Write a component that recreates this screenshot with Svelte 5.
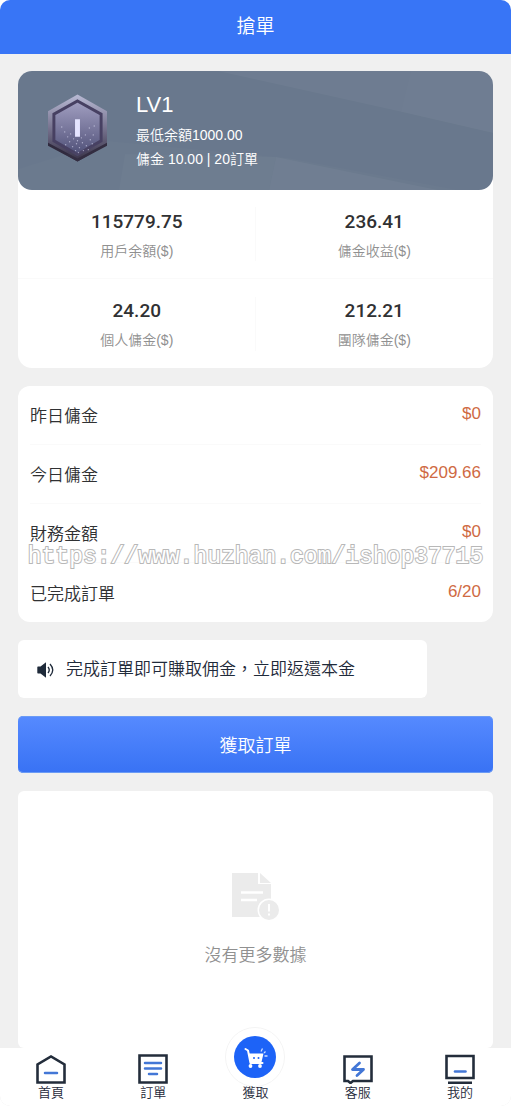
<script>
  const stats = [
    { value: '115779.75', label: '用戶余額($)' },
    { value: '236.41', label: '傭金收益($)' },
    { value: '24.20', label: '個人傭金($)' },
    { value: '212.21', label: '團隊傭金($)' }
  ];
  const rows = [
    { label: '昨日傭金', value: '$0' },
    { label: '今日傭金', value: '$209.66' },
    { label: '財務金額', value: '$0' },
    { label: '已完成訂單', value: '6/20' }
  ];
  const specks = [
    [18, 52], [22, 49], [25, 54], [29, 51], [32, 55], [35, 50], [39, 53], [43, 47],
    [20, 44], [26, 46], [34, 45], [38, 42], [45, 51], [17, 39], [42, 35], [47, 33],
    [28, 58], [31, 60], [36, 58], [23, 41], [46, 42], [41, 57], [30, 48], [14, 34]
  ];
</script>

<div class="page">
  <header><h1>搶單</h1></header>

  <main>
    <section class="account">
      <div class="level">
        <svg class="facets" viewBox="0 0 475 119" preserveAspectRatio="none" aria-hidden="true">
          <path d="M200 0 380 40 475 62V0Z" fill="#fff" opacity=".035" />
          <path d="M393 0 383 41 475 62V0Z" fill="#fff" opacity=".012" />
          <path d="M90 70 270 87 440 119H0V98Z" fill="#fff" opacity=".015" />
          <path d="M107 83 258 86 251 119H101Z" fill="#fff" opacity=".025" />
          <path d="M258 86 420 119H251Z" fill="#fff" opacity=".035" />
        </svg>
        <svg class="badge" viewBox="0 0 60 70" aria-hidden="true">
          <defs>
            <linearGradient id="rim" x1="0" y1="0" x2="0" y2="1">
              <stop offset="0" stop-color="#b9bad4" />
              <stop offset=".5" stop-color="#77738f" />
              <stop offset="1" stop-color="#332d43" />
            </linearGradient>
            <linearGradient id="face" x1="0" y1="0" x2="0" y2="1">
              <stop offset="0" stop-color="#a29fc1" />
              <stop offset=".55" stop-color="#76759a" />
              <stop offset="1" stop-color="#4f5078" />
            </linearGradient>
          </defs>
          <path d="M30 1 60 18V52L30 69 0 52V18Z" fill="url(#rim)" />
          <path d="M0 50 30 66 60 50V53L30 69 0 53Z" fill="#302a3e" />
          <path d="M30 7.500 54 21V48L30 62 6 48V21Z" fill="url(#face)" stroke="#474062" stroke-width="3" />
          {#each specks as [x, y]}
            <circle cx={x} cy={y} r=".7" fill="#d8d8f0" opacity=".65" />
          {/each}
          <path d="M27.500 26H32.500V44H27.500Z" fill="#e5e4ff" />
        </svg>
        <div class="level-text">
          <h2>LV1</h2>
          <p>最低余額1000.00</p>
          <p>傭金 10.00 | 20訂單</p>
        </div>
      </div>
      <div class="stats">
        {#each stats as s}
          <div class="stat">
            <strong>{s.value}</strong>
            <span>{s.label}</span>
          </div>
        {/each}
      </div>
    </section>

    <section class="summary">
      {#each rows as r}
        <div class="row"><span>{r.label}</span><b>{r.value}</b></div>
      {/each}
      <div class="watermark">https://www.huzhan.com/ishop37715</div>
    </section>

    <div class="notice">
      <svg viewBox="0 0 18 16" aria-hidden="true">
        <path d="M1 4.500H3.500L9 .2V15.800L3.500 11.500H1Q.3 11.500 .3 10.800V5.200Q.3 4.500 1 4.500Z" fill="#1f2a3a" />
        <path d="M11 5Q13.500 8 11 11M13 2Q18.500 8 13 14" fill="none" stroke="#1f2a3a" stroke-width="1.300" />
      </svg>
      <span>完成訂單即可賺取佣金，立即返還本金</span>
    </div>

    <button class="grab" type="button">獲取訂單</button>

    <section class="empty">
      <svg viewBox="0 0 48 48" aria-hidden="true">
        <path d="M0 1H26V12H39V45H0Z" fill="#ebebeb" />
        <path d="M28 1 39 11H28Z" fill="#ebebeb" />
        <path d="M9 20.500H31M9 28H25" stroke="#fff" stroke-width="2.500" />
        <circle cx="37" cy="38" r="11.500" fill="#fff" />
        <circle cx="37" cy="38" r="10" fill="#ebebeb" />
        <path d="M37 32V39.500M37 41.500V43.500" stroke="#fff" stroke-width="2" />
      </svg>
      <p>沒有更多數據</p>
    </section>
  </main>

  <nav>
    <a href="#home">
      <svg viewBox="0 0 30 30" aria-hidden="true">
        <path d="M1.500 28.500V10.500L15 2.500 28.500 10.500V28.500Z" fill="none" stroke="#232d3b" stroke-width="2.600" />
        <path d="M9 19H21" stroke="#4377d6" stroke-width="2.500" stroke-linecap="round" />
      </svg>
      <span>首頁</span>
    </a>
    <a href="#orders">
      <svg viewBox="0 0 30 30" aria-hidden="true">
        <path d="M1.500 1.500H28.500V28.500H1.500Z" fill="none" stroke="#232d3b" stroke-width="2.600" />
        <path d="M7 9H23M7 14.500H23M11 20H19" stroke="#4377d6" stroke-width="2.500" stroke-linecap="round" />
      </svg>
      <span>訂單</span>
    </a>
    <a href="#grab" class="center">
      <i>
        <svg viewBox="0 0 42 42" aria-hidden="true">
          <circle cx="21" cy="21" r="21" fill="#1d63f7" />
          <path d="M11.500 13 14 14.500 16.500 27H28.500" fill="none" stroke="#fff" stroke-width="2" stroke-linecap="round" stroke-linejoin="round" />
          <path d="M14.500 17.500H29.500L27.500 26H16.500Z" fill="#fff" />
          <circle cx="16.500" cy="30" r="1.900" fill="#fff" />
          <circle cx="26" cy="30" r="1.900" fill="#fff" />
          <circle cx="20" cy="22" r="1" fill="#1d63f7" />
          <circle cx="24.500" cy="22" r="1" fill="#1d63f7" />
          <path d="M27 15.500 28.500 12.500M30 17 31.500 15.500M30.500 20H33.500" stroke="#cfe0ff" stroke-width="1.300" />
        </svg>
      </i>
      <span>獲取</span>
    </a>
    <a href="#service">
      <svg viewBox="0 0 30 30" aria-hidden="true">
        <path d="M1.500 2.500H28.500V27H10L7.500 29 5 27H1.500Z" fill="none" stroke="#232d3b" stroke-width="2.600" />
        <path d="M16.500 9 9.500 15.500H20.500L14 21.500" fill="none" stroke="#4377d6" stroke-width="2.800" stroke-linecap="round" stroke-linejoin="round" />
      </svg>
      <span>客服</span>
    </a>
    <a href="#mine">
      <svg viewBox="0 0 30 30" aria-hidden="true">
        <path d="M1.500 2H28.500V24H1.500Z" fill="none" stroke="#232d3b" stroke-width="2.600" />
        <path d="M3 28.700H27" stroke="#232d3b" stroke-width="2.400" />
        <path d="M10 17.500H20.500" stroke="#4377d6" stroke-width="2.600" stroke-linecap="round" />
      </svg>
      <span>我的</span>
    </a>
  </nav>
</div>

<style>
  :global(body) {
    margin: 0;
    background: #fff;
    font-family: "Liberation Sans", "Noto Sans CJK TC", sans-serif;
    font-weight: 350;
  }
  h1, h2, p { margin: 0; font-weight: 350; }
  .page {
    min-height: 100vh;
    display: flex;
    flex-direction: column;
    background: #f0f0f0;
    border-radius: 10px;
    overflow: hidden;
  }
  header {
    height: 54px;
    display: flex;
    align-items: center;
    justify-content: center;
    background: #3875f6;
    color: #fff;
  }
  h1 { font-size: 19px; line-height: 28px; }
  main {
    flex: 1;
    display: flex;
    flex-direction: column;
    gap: 18px;
    padding: 17px 18px 0;
  }
  .account { background: #fff; border-radius: 14px; }
  .level {
    position: relative;
    height: 119px;
    box-sizing: border-box;
    display: flex;
    gap: 29px;
    padding: 22px 30px 0;
    border-radius: 14px;
    overflow: hidden;
    background: #69788d;
    color: #fff;
  }
  .facets { position: absolute; inset: 0; width: 100%; height: 100%; }
  .badge { width: 59px; height: 70px; }
  h2 { font-size: 22px; line-height: 24px; padding-bottom: 6px; }
  .level-text p { font-size: 14px; line-height: 24px; }
  .stats { display: grid; grid-template-columns: 1fr 1fr; }
  .stat {
    height: 89px;
    box-sizing: border-box;
    display: flex;
    flex-direction: column;
    align-items: center;
    padding-top: 19px;
    border-bottom: 1px solid #fafafa;
    background: linear-gradient(#fafafa, #fafafa) right center / 1px 54px no-repeat;
  }
  .stat:nth-child(even) { background: none; }
  .stat:nth-child(n + 3) { border-bottom: 0; }
  .stat strong {
    font: 500 19px/26px "Roboto", sans-serif;
    color: #303133;
  }
  .stat span { padding-top: 4px; font-size: 14px; line-height: 24px; color: #909090; }
  .summary {
    position: relative;
    padding: 0 12px;
    background: #fff;
    border-radius: 12px;
  }
  .row {
    height: 59px;
    box-sizing: border-box;
    display: flex;
    justify-content: space-between;
    align-items: center;
    border-bottom: 1px solid #fafafa;
    font-size: 17px;
    line-height: 26px;
    color: #303133;
  }
  .row:nth-child(4) { border: 0; }
  .row span { padding-top: 4px; }
  .row b { font-weight: 400; color: #cf6a43; padding-bottom: 2px; }
  .watermark {
    position: absolute;
    top: 156px;
    left: 0;
    right: 0;
    text-align: center;
    white-space: nowrap;
    font: 400 23px/30px "Liberation Mono", monospace;
    color: #fff;
    -webkit-text-stroke: 2px #b8b8b8;
    paint-order: stroke fill;
    pointer-events: none;
  }
  .notice {
    width: 86%;
    box-sizing: border-box;
    min-height: 58px;
    display: flex;
    align-items: center;
    gap: 11px;
    padding: 2px 19px 0;
    background: #fff;
    border-radius: 6px;
    font-size: 17px;
    line-height: 26px;
    color: #1f2a3a;
  }
  .notice svg { width: 18px; height: 16px; flex: none; }
  .grab {
    height: 57px;
    padding: 0 0 2px;
    border: 0;
    border-radius: 5px;
    background: linear-gradient(#568aff, #3872f4);
    color: #fff;
    font: inherit;
    font-size: 18px;
    box-shadow: inset 0 1px #6b9bf5, inset 0 -1px #6b9bf5;
  }
  .empty {
    flex: 1;
    min-height: 240px;
    display: flex;
    flex-direction: column;
    align-items: center;
    background: #fff;
    border-radius: 6px;
  }
  .empty svg { width: 48px; height: 48px; padding-top: 81px; }
  .empty p { padding-top: 23px; font-size: 17px; line-height: 26px; color: #909090; }
  nav {
    height: 58px;
    display: grid;
    grid-template-columns: repeat(5, 1fr);
    grid-template-rows: 58px;
    background: #fff;
    border-radius: 0 0 10px 10px;
  }
  nav a {
    min-height: 0;
    box-sizing: border-box;
    display: flex;
    flex-direction: column;
    align-items: center;
    justify-content: flex-end;
    padding-bottom: 4px;
    color: #1f2a3a;
    text-decoration: none;
    font-size: 13px;
    line-height: 18px;
  }
  nav a > svg { width: 30px; height: 30px; flex: none; }
  .center i {
    display: flex;
    padding: 8px;
    margin-bottom: -3px;
    border: 1px solid #f4f4f4;
    border-radius: 50%;
    background: #fff;
  }
  .center i svg { width: 42px; height: 42px; }
</style>
